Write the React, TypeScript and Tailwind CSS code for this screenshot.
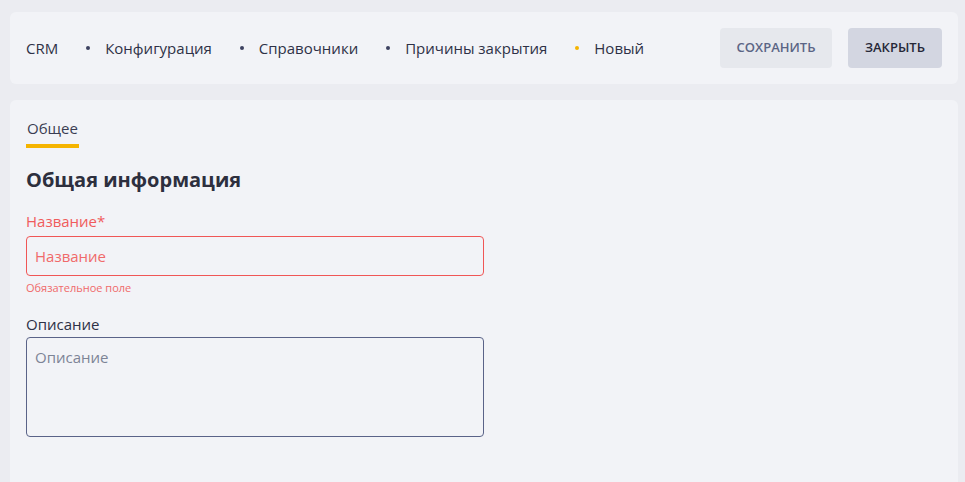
import React from 'react';

const CRUMBS = ['CRM', 'Конфигурация', 'Справочники', 'Причины закрытия', 'Новый'];

const font = { fontFamily: '"Open Sans", "Noto Sans", sans-serif' };

export default function App() {
  return (
    <div className="min-h-screen bg-[#ebecf1] pt-3 pl-[10px] pr-[7px] text-[#2e3146]" style={font}>
      {/* header */}
      <div className="flex h-[72px] items-center justify-between rounded-md bg-[#f2f3f7] pl-4 pr-4">
        <nav className="flex items-center text-[15px]">
          {CRUMBS.map((c, i) => (
            <React.Fragment key={c}>
              {i > 0 && (
                <span
                  className={`ml-[28px] mr-[15px] h-[4px] w-[4px] rounded-full ${
                    i === CRUMBS.length - 1 ? 'bg-[#f5b400]' : 'bg-[#3d4160]'
                  }`}
                />
              )}
              <span>{c}</span>
            </React.Fragment>
          ))}
        </nav>
        <div className="flex gap-4">
          <button className="h-10 w-[112px] rounded bg-[#e6e8ed] text-[13px] font-semibold text-[#5b6585]">
            СОХРАНИТЬ
          </button>
          <button className="h-10 w-[94px] rounded bg-[#d3d6e1] text-[13px] font-semibold text-[#262838]">
            ЗАКРЫТЬ
          </button>
        </div>
      </div>

      {/* body */}
      <div className="mt-4 h-[400px] rounded-t-md bg-[#f2f3f7] px-4 pt-[16px]">
        <div className="inline-flex flex-col">
          <span className="px-[1px] text-[15px] leading-5 text-[#3a3d52]">Общее</span>
          <span className="mt-[6px] h-[4px] w-[53px] bg-[#f5b400]" />
        </div>

        <h2 className="mt-[18px] text-[20px] font-bold leading-7 text-[#2d2f3e]">Общая информация</h2>

        <div className="mt-[17px] w-[458px]">
          <label className="block text-[15px] leading-5 text-[#f05c5c]">Название*</label>
          <input
            placeholder="Название"
            className="mt-[5px] h-10 w-full rounded border border-[#f05656] bg-transparent px-2 text-[15px] outline-none placeholder:text-[#f06a6a]"
          />
          <p className="mt-[4px] text-[11px] leading-4 text-[#f06a6a]">Обязательное поле</p>

          <label className="mt-[18px] block text-[15px] leading-5 text-[#2e3146]">Описание</label>
          <textarea
            placeholder="Описание"
            className="mt-[3px] block h-[100px] w-full resize-none rounded border border-[#5a6388] bg-transparent px-2 pt-[8px] text-[15px] outline-none placeholder:text-[#7d8496]"
          />
        </div>
      </div>
    </div>
  );
}
